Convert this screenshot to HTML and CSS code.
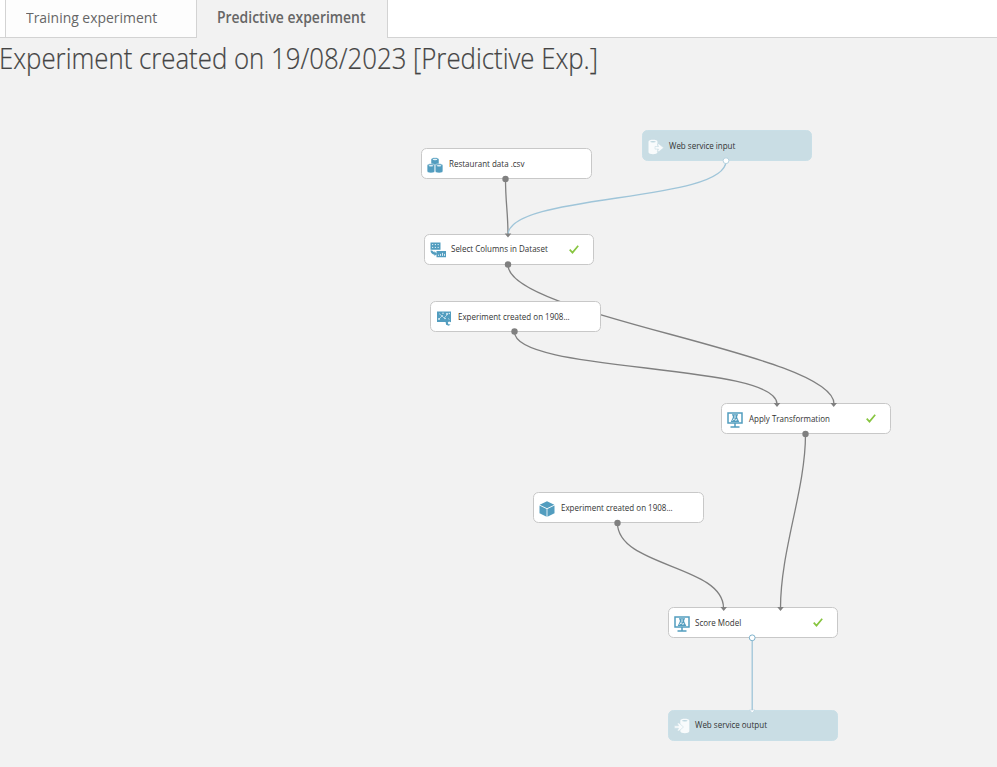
FILE: index.html
```html
<!DOCTYPE html>
<html lang="en">
<head>
<meta charset="utf-8">
<title>Predictive experiment</title>
<link rel="stylesheet" href="styles.css">
</head>
<body>
<nav class="tabs">
  <a class="tab"><span>Training experiment</span></a>
  <a class="tab active"><span>Predictive experiment</span></a>
</nav>
<h1 class="title"><span>Experiment created on 19/08/2023 [Predictive Exp.]</span></h1>

<svg class="symbols" width="0" height="0">
  <symbol id="data" viewBox="0 0 16 16">
    <g fill="#529dbf" stroke="#fff" stroke-width=".5">
      <path d="M4 2.3C4 .1 12 .1 12 2.3V8H4z"/>
      <path d="M.1 8.500c0-2.200 7.700-2.200 7.700 0v5.800c0 2.200-7.700 2.200-7.700 0z"/>
      <path d="M8.200 8.500c0-2.200 7.700-2.200 7.700 0v5.800c0 2.200-7.700 2.200-7.700 0z"/>
    </g>
    <g fill="#e4f2f8"><ellipse cx="8" cy="2.500" rx="2.400" ry=".7"/><ellipse cx="4" cy="8.800" rx="2.400" ry=".7"/><ellipse cx="12" cy="8.800" rx="2.400" ry=".7"/></g>
  </symbol>
  <symbol id="columns" viewBox="0 0 16 16">
    <path fill="#529dbf" d="M.5.5h10v7.200H.5zM6.500 9H16v6.200H6.500zM.5 8.500H2l2.500 2V9l2.300 3-2.300 2v-1.300C2 12.300.6 10.700.5 8.500z"/>
    <path stroke="#e4f2f8" stroke-width="1" stroke-dasharray="1.2 1.6" d="M2 2.600h8M2 5.400h8"/>
    <path stroke="#e4f2f8" stroke-width=".9" d="M8.500 13.900v-1.200M10.500 13.900v-2M12.500 13.900v-3M14.500 13.900v-2"/>
  </symbol>
  <symbol id="transform" viewBox="0 0 16 16">
    <path fill="#529dbf" d="M1 1.500h14v10.700l-2-.8-1.200 1 .6 1.800 2.200.2-1.800 1.300-2.700-1-.5-2.700H1z"/>
    <path fill="none" stroke="#e4f2f8" stroke-width=".6" d="m3 9 3-3 2 2 3-3M3 3.500l2 1.700M12 8.500l1.500 1"/>
    <g fill="#e4f2f8"><circle cx="3" cy="9" r=".9"/><circle cx="6" cy="5.700" r=".8"/><circle cx="7" cy="3.300" r=".7"/><circle cx="11" cy="4" r="1"/><circle cx="13.300" cy="3.500" r=".7"/><circle cx="9" cy="8.500" r=".8"/></g>
  </symbol>
  <symbol id="monitor" viewBox="0 0 16 16">
    <path fill="none" stroke="#529dbf" stroke-width="1.500" d="M1 1h14v10H1zM8 11v3.500M3.500 15h9"/>
    <path fill="#529dbf" d="M5 2.200h6v1.200h-.8v2L12.300 10H3.700l2.100-4.600v-2H5z"/>
    <path stroke="#fff" stroke-width=".9" fill="none" d="M8 3.200v3M5.600 8.600l1.500-2 1.800 2 1-1.500"/>
  </symbol>
  <symbol id="cube" viewBox="0 0 16 16">
    <path fill="#529dbf" d="M8 .2 15.300 3.700 8 7.300.7 3.700zM.5 4.600l7.100 3.500v7.600L.5 12.200zM15.500 4.600 8.400 8.100v7.600l7.100-3.500z"/>
  </symbol>
  <symbol id="input" viewBox="0 0 16 16">
    <path fill="#f8fbfc" d="M.5 2.800C.5.2 9.500.2 9.500 2.800v10.500c0 2.600-9 2.600-9 0z"/>
    <ellipse cx="5" cy="2.800" rx="2.800" ry=".8" fill="#bdd6df"/>
    <path fill="#f8fbfc" stroke="#c9dde4" stroke-width=".6" d="M7 7.500h3.500L9.300 5H11l4.700 3.800L11 12.600H9.300l1.200-2.500H7z"/>
  </symbol>
  <symbol id="output" viewBox="0 0 16 16">
    <path fill="#f8fbfc" d="M6.300 2.800c0-2.600 9-2.600 9 0v10.500c0 2.600-9 2.600-9 0z"/>
    <ellipse cx="10.800" cy="2.800" rx="2.800" ry=".8" fill="#bdd6df"/>
    <path fill="#f8fbfc" stroke="#c9dde4" stroke-width=".6" d="M.4 7.800h4.100L3.200 5H5l4.500 4L5 13H3.200l1.300-2.800H.4z"/>
  </symbol>
  <symbol id="check" viewBox="0 0 10 9"><path fill="none" stroke="#87c540" stroke-width="1.700" d="m.7 4.600 2.800 3L9.200.8"/></symbol>
</svg>

<main class="canvas">
  <svg class="wires" width="997" height="767" viewBox="0 0 997 767">
    <g class="wire">
      <path d="M505.500 179C505.500 203 508 212 508 235"/>
      <path d="M508 265C508 316 834 353 834 404"/>
      <path d="M514.500 332C514.500 373 777 363 777 404"/>
      <path d="M805.500 434C805.500 490 780.500 550 780.500 608"/>
      <path d="M617.500 523C617.500 567 723.500 565 723.500 608"/>
    </g>
    <g class="wire service">
      <path d="M726 161C726 203 508 193 508 235"/>
      <path d="M752.200 638V710"/>
    </g>
  </svg>

  <div class="node n-data"><svg class="icon"><use href="#data"/></svg><span class="label">Restaurant data .csv</span></div>
  <div class="node service n-input"><svg class="icon"><use href="#input"/></svg><span class="label">Web service input</span></div>
  <div class="node n-select"><svg class="icon"><use href="#columns"/></svg><span class="label">Select Columns in Dataset</span><svg class="check"><use href="#check"/></svg></div>
  <div class="node n-trans"><svg class="icon"><use href="#transform"/></svg><span class="label">Experiment created on 1908...</span></div>
  <div class="node n-apply"><svg class="icon"><use href="#monitor"/></svg><span class="label">Apply Transformation</span><svg class="check"><use href="#check"/></svg></div>
  <div class="node n-model"><svg class="icon"><use href="#cube"/></svg><span class="label">Experiment created on 1908...</span></div>
  <div class="node n-score"><svg class="icon"><use href="#monitor"/></svg><span class="label">Score Model</span><svg class="check"><use href="#check"/></svg></div>
  <div class="node service n-output"><svg class="icon"><use href="#output"/></svg><span class="label">Web service output</span></div>

  <svg class="ports" width="997" height="767" viewBox="0 0 997 767">
    <g fill="#808080">
      <circle cx="505.500" cy="179" r="3.200"/><circle cx="508" cy="264.500" r="3.200"/><circle cx="514.500" cy="331.500" r="3.200"/>
      <circle cx="805.500" cy="434" r="3.200"/><circle cx="617.500" cy="523" r="3.200"/>
      <path d="M504.700 233.500h6.600l-3.300 4zM773.700 403h6.600l-3.300 4zM830.400 403h6.600l-3.300 4zM720.400 607h6.600l-3.300 4zM777.200 607h6.600l-3.300 4z"/>
    </g>
    <g fill="#fff" stroke="#b5d2df">
      <circle cx="726" cy="160.700" r="2.900"/><circle cx="752.200" cy="637.800" r="2.900" stroke="#7fb3cd"/>
      <path d="M749.400 710h5.600l-2.800 2.800z" stroke-width=".6"/>
    </g>
  </svg>
</main>
</body>
</html>
```
FILE: styles.css
```css
* { box-sizing: border-box; }
body {
  margin: 0;
  width: 997px;
  height: 767px;
  overflow: hidden;
  background: #f2f2f2;
  color: #444;
  font-family: "Open Sans", "Noto Sans", sans-serif;
}
.tabs {
  display: flex;
  height: 38px;
  padding-left: 5px;
  background: #fff;
  border-bottom: 1px solid #d3d3d3;
}
.tab {
  width: 191px;
  height: 37px;
  padding-left: 20px;
  border-left: 1px solid #d3d3d3;
  background: #fdfdfd;
  color: #666;
  font-size: 15.3px;
  line-height: 35px;
  white-space: nowrap;
}
.tab span, .title span {
  display: inline-block;
  transform: scaleX(.91);
  transform-origin: 0 50%;
}
.tab.active {
  width: 192px;
  height: 38px;
  border-right: 1px solid #d3d3d3;
  background: #f2f2f2;
  font-weight: 600;
}
.title {
  margin: 0 0 0 -1px;
  height: 42px;
  font-size: 28.5px;
  font-weight: 300;
  line-height: 40px;
  white-space: nowrap;
  -webkit-text-stroke: .2px #444;
}
.title span { transform: scaleX(.905); }
.symbols { position: absolute; }
.wires, .ports { position: absolute; left: 0; top: 0; pointer-events: none; }
.wire { fill: none; stroke: #808080; stroke-width: 1.3; }
.wire.service { stroke: #9fc5d9; }
.node {
  position: absolute;
  display: flex;
  align-items: center;
  width: 170.5px;
  height: 31px;
  padding: 0 14px 0 5px;
  border: 1px solid #c8c8c8;
  border-radius: 5.5px;
  background: #fff;
}
.node.service { background: #c9dde4; border-color: #c9dfe7; }
.icon { width: 16px; height: 16px; margin-top: 2px; flex: none; }
.label {
  flex: 1;
  margin-left: 5.5px;
  color: #333;
  font-size: 8.6px;
  line-height: 12px;
  white-space: nowrap;
  transform: translateY(-.5px) scaleX(.93);
  transform-origin: 0 50%;
}
.check { width: 10px; height: 9px; flex: none; }
.n-data { left: 421px; top: 148px; }
.n-input { left: 641.5px; top: 130px; }
.n-select { left: 423.5px; top: 233.5px; }
.n-trans { left: 430px; top: 301px; }
.n-apply { left: 721px; top: 403px; width: 170px; }
.n-model { left: 533px; top: 492px; }
.n-score { left: 667.5px; top: 607px; }
.n-output { left: 667.5px; top: 709.5px; }
```
